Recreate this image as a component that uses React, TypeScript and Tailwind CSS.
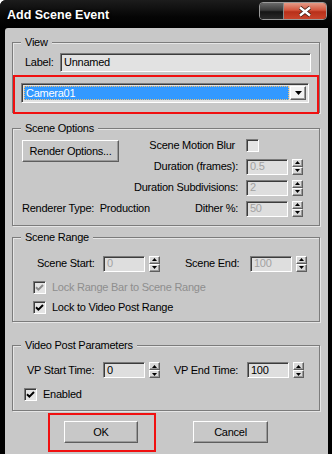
import React from "react";

const SUNKEN =
  "border border-t-[#7b7b7b] border-l-[#7b7b7b] border-b-white border-r-white shadow-[inset_1px_1px_0_#3c3c3c]";
const RAISED =
  "border border-t-white border-l-white border-b-[#5e5e5e] border-r-[#5e5e5e] shadow-[inset_-1px_-1px_0_#9a9a9a]";

function Group({ title, className, children }: { title: string; className: string; children?: React.ReactNode }) {
  return (
    <div className={"ml-[7px] w-[308px] border border-[#7c7c7c] shadow-[1px_1px_0_#e6e6e6,inset_1px_1px_0_#e6e6e6] " + className}>
      <div className="ml-[8px] -mt-[8px] w-fit bg-[#c8c8c8] px-[4px] leading-[14px]">{title}</div>
      {children}
    </div>
  );
}

function Spinner() {
  return (
    <div className="ml-[4px] flex h-[16px] w-[11px] shrink-0 flex-col">
      <div className={"flex flex-1 items-center justify-center bg-[#dadada] " + RAISED}>
        <svg width="5" height="3" viewBox="0 0 5 3">
          <path d="M2.5 0L5 3H0z" fill="#000" />
        </svg>
      </div>
      <div className={"flex flex-1 items-center justify-center bg-[#dadada] " + RAISED}>
        <svg width="5" height="3" viewBox="0 0 5 3">
          <path d="M0 0H5L2.5 3z" fill="#000" />
        </svg>
      </div>
    </div>
  );
}

function Field({ value, disabled }: { value: string; disabled?: boolean }) {
  return (
    <div
      className={
        "flex h-[16px] w-[42px] shrink-0 items-center bg-[#dedede] pl-[3px] leading-none " +
        SUNKEN +
        (disabled ? " text-[#a2a2a2]" : " text-black")
      }
    >
      {value}
    </div>
  );
}

function Check({ checked, disabled }: { checked?: boolean; disabled?: boolean }) {
  return (
    <div className={"flex h-[13px] w-[13px] shrink-0 items-center justify-center bg-[#e4e4e4] " + SUNKEN}>
      {checked && (
        <svg width="9" height="9" viewBox="0 0 9 9">
          <path d="M1 4.2L3.4 6.6L8 2" fill="none" stroke={disabled ? "#8a8a8a" : "#000"} strokeWidth="2" />
        </svg>
      )}
    </div>
  );
}

function Button({ label, className }: { label: string; className: string }) {
  return (
    <div className={"flex h-[22px] items-center justify-center bg-[#c8c8c8] " + RAISED + " " + className}>{label}</div>
  );
}

export default function App() {
  return (
    <div className="relative h-[454px] w-[332px] overflow-hidden whitespace-nowrap rounded-tl-[6px] bg-black pl-[5px] pr-[4px] font-['Liberation_Sans',Arial,sans-serif] text-[11px] tracking-[-0.25px] text-black">
      {/* title bar */}
      <div className="-ml-[5px] -mr-[4px] flex h-[28px] items-start bg-[linear-gradient(180deg,#1c1c1c_0%,#050505_60%,#000_100%)]">
        <div className="ml-[7px] mt-[6px] text-[12.5px] font-bold leading-[18px] tracking-normal text-white [text-shadow:0_0_3px_#000]">
          Add Scene Event
        </div>
        <div className="ml-auto mr-[5px] mt-[2px] flex h-[18px] overflow-hidden rounded-[4px] border border-[#9a9a9a]">
          <div className="w-[24px] border-r border-[#8a8a8a] bg-[linear-gradient(180deg,#6a6a6a_0%,#3a3a3a_45%,#151515_55%,#2a2a2a_100%)]" />
          <div className="flex w-[42px] items-center justify-center bg-[linear-gradient(180deg,#e59a86_0%,#d4553d_45%,#b8301a_55%,#c9442c_100%)]">
            <svg width="14" height="11" viewBox="0 0 14 11">
              <path d="M2 1.5L12 9.5M12 1.5L2 9.5" stroke="#3a1a10" strokeWidth="4" />
              <path d="M2 1.5L12 9.5M12 1.5L2 9.5" stroke="#fff" strokeWidth="2.4" />
            </svg>
          </div>
        </div>
      </div>

      {/* body */}
      <div className="relative h-[426px] rounded-tl-[3px] bg-[#c8c8c8] pt-[14px]">
        <Group title="View" className="h-[71px]">
          <div className="mt-[4px] flex items-center pl-[12px]">
            <div className="w-[35px]">Label:</div>
            <div className={"flex h-[19px] w-[251px] items-center bg-[#e2e2e2] pl-[3px] " + SUNKEN}>Unnamed</div>
          </div>
          <div className={"ml-[8px] mt-[11px] flex h-[20px] w-[288px] items-stretch bg-[#e2e2e2] p-[2px] " + SUNKEN}>
            <div className="flex flex-1 items-center border border-dotted border-[#f0c070] bg-[#3399ff] pl-[1px] text-white">
              Camera01
            </div>
            <div className={"ml-[1px] flex w-[16px] items-center justify-center bg-[#f2f2f2] " + RAISED}>
              <svg width="7" height="4" viewBox="0 0 7 4">
                <path d="M0 0H7L3.5 4z" fill="#000" />
              </svg>
            </div>
          </div>
        </Group>

        <Group title="Scene Options" className="mt-[15px] h-[98px]">
          <div className="flex">
            <div className="w-[109px] shrink-0 pl-[9px]">
              <Button label="Render Options..." className="mt-[5px] w-[97px]" />
              <div className="mt-[36px] flex h-[21px] items-center whitespace-pre">Renderer Type:  Production</div>
            </div>
            <div className="min-w-0 flex-1 pr-[16px]">
              <div className="flex h-[21px] items-center justify-end">
                <span className="mr-[11px]">Scene Motion Blur</span>
                <div className="w-[57px]">
                  <Check />
                </div>
              </div>
              {[
                ["Duration (frames):", "0.5"],
                ["Duration Subdivisions:", "2"],
                ["Dither %:", "50"],
              ].map(([l, v]) => (
                <div key={l} className="flex h-[21px] items-center justify-end">
                  <span className="mr-[8px]">{l}</span>
                  <Field value={v} disabled />
                  <Spinner />
                </div>
              ))}
            </div>
          </div>
        </Group>

        <Group title="Scene Range" className="mt-[11px] h-[85px]">
          <div className="mt-[9px] flex h-[21px] items-center pl-[24px]">
            <span className="w-[66px]">Scene Start:</span>
            <Field value="0" disabled />
            <Spinner />
            <span className="ml-[25px] w-[65px]">Scene End:</span>
            <Field value="100" disabled />
            <Spinner />
          </div>
          <div className="mt-[3px] flex h-[20px] items-center pl-[20px] text-[#8e8e8e]">
            <Check checked disabled />
            <span className="ml-[6px]">Lock Range Bar to Scene Range</span>
          </div>
          <div className="flex h-[20px] items-center pl-[20px]">
            <Check checked />
            <span className="ml-[6px]">Lock to Video Post Range</span>
          </div>
        </Group>

        <Group title="Video Post Parameters" className="mt-[23px] h-[66px]">
          <div className="mt-[8px] flex h-[20px] items-center pl-[14px]">
            <span className="w-[76px]">VP Start Time:</span>
            <Field value="0" />
            <Spinner />
            <span className="ml-[14px] w-[73px]">VP End Time:</span>
            <Field value="100" />
            <Spinner />
          </div>
          <div className="mt-[4px] flex h-[21px] items-center pl-[11px]">
            <Check checked />
            <span className="ml-[6px]">Enabled</span>
          </div>
        </Group>

        <div className="mt-[10px] flex">
          <Button label="OK" className="ml-[59px] w-[74px]" />
          <Button label="Cancel" className="ml-[55px] w-[75px]" />
        </div>

        {/* red annotation frames */}
        <div className="absolute left-[8px] top-[47px] h-[39px] w-[306px] border-[2.5px] border-[#f01010]" />
        <div className="absolute left-[43px] top-[385px] h-[39px] w-[108px] border-[2.5px] border-[#f01010]" />
      </div>
    </div>
  );
}
